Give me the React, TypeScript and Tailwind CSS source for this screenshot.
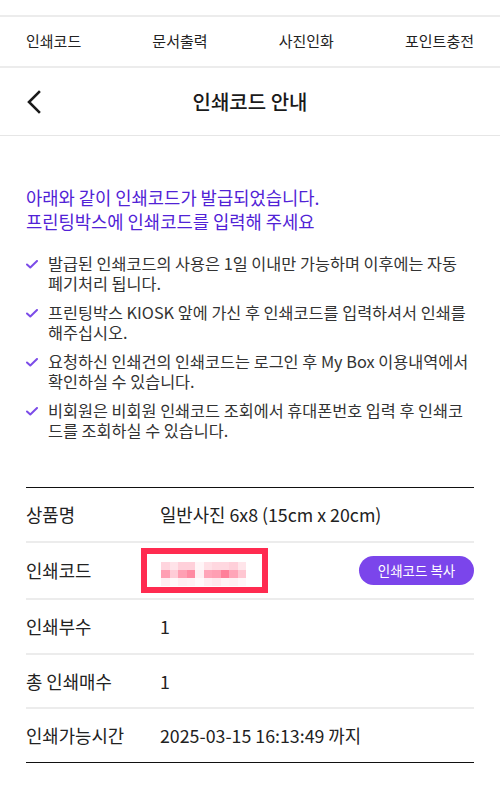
const navItems = ["인쇄코드", "문서출력", "사진인화", "포인트충전"];

const notices = [
  "발급된 인쇄코드의 사용은 1일 이내만 가능하며 이후에는 자동 폐기처리 됩니다.",
  "프린팅박스 KIOSK 앞에 가신 후 인쇄코드를 입력하셔서 인쇄를 해주십시오.",
  "요청하신 인쇄건의 인쇄코드는 로그인 후 My Box 이용내역에서 확인하실 수 있습니다.",
  "비회원은 비회원 인쇄코드 조회에서 휴대폰번호 입력 후 인쇄코드를 조회하실 수 있습니다.",
];

// pixelated blur over the code
const pixels = [
  "bg-[#ffd5de]", "bg-[#ffe3e9]", "bg-[#ffd0da]", "bg-[#ffd0da]", "bg-[#fff5f7]",
  "bg-[#ffe0e6]", "bg-[#ffd8e0]", "bg-[#ffd8e0]", "bg-[#ffd0da]", "bg-[#ffe5ea]",
  "bg-[#ff9fb3]", "bg-[#ffccd7]", "bg-[#ff9fb3]", "bg-[#ff8aa2]", "bg-[#fff0f3]",
  "bg-[#ffa5b8]", "bg-[#ff9fb3]", "bg-[#ff7f99]", "bg-[#ffa5b8]", "bg-[#ffc7d2]",
  "bg-[#ffeef2]", "bg-[#fff8f9]", "bg-[#ffeef2]", "bg-[#fff1f4]", "bg-[#fffafb]",
  "bg-[#ffeef2]", "bg-[#ffe8ed]", "bg-[#fff3f5]", "bg-[#fff0f3]", "bg-[#fff7f9]",
];

const CheckIcon = () => (
  <svg width="12" height="9" viewBox="0 0 12 9" fill="none" className="mt-[7px] shrink-0">
    <path d="M1 4.5 L4.3 7.5 L11 1" stroke="#7c4ce8" strokeWidth="2" strokeLinecap="round" strokeLinejoin="round" />
  </svg>
);

const Row = ({ label, children, height }: { label: string; children: React.ReactNode; height: string }) => (
  <div className={`flex items-center border-b-2 border-[#ececec] ${height}`}>
    <div className="w-[134px] shrink-0 text-[17.8px] text-[#222]">{label}</div>
    <div className="flex flex-1 items-center text-[17.8px] text-[#222]">{children}</div>
  </div>
);

const App = () => {
  return (
    <div className="min-h-[787px] bg-white font-['Noto_Sans_CJK_KR','Noto_Sans',sans-serif]">
      <div className="h-[17px] border-b-2 border-[#ececec]" />
      <nav className="flex h-[51px] items-center justify-between border-b-2 border-[#ececec] px-[26px] text-[15px] text-[#222]">
        {navItems.map((item) => (
          <span key={item}>{item}</span>
        ))}
      </nav>
      <header className="relative flex h-[68px] items-center justify-center border-b border-[#e6e6e6]">
        <button className="absolute left-[26px] top-[22px]">
          <svg width="16" height="24" viewBox="0 0 16 24" fill="none">
            <path d="M13 2 L3 12 L13 22" stroke="#1a1a1a" strokeWidth="2.6" strokeLinecap="square" />
          </svg>
        </button>
        <h1 className="text-[20px] font-medium text-[#1a1a1a]">인쇄코드 안내</h1>
      </header>

      <main className="px-[26px] pt-[49px]">
        <div className="text-[17.7px] text-[#5122d6]">
          <p className="leading-[24px]">아래와 같이 인쇄코드가 발급되었습니다.</p>
          <p className="leading-[24px]">프린팅박스에 인쇄코드를 입력해 주세요</p>
        </div>

        <ul className="mt-[20px] flex flex-col gap-[9px]">
          {notices.map((text) => (
            <li key={text} className="flex gap-[10px] text-[16.3px] leading-[20px] text-[#333]">
              <CheckIcon />
              <span>{text}</span>
            </li>
          ))}
        </ul>

        <section className="mt-[47px] border-t border-[#111]">
          <Row label="상품명" height="h-[55px]">일반사진 6x8 (15cm x 20cm)</Row>
          <Row label="인쇄코드" height="h-[57px]">
            <div className="-ml-[19px] flex h-[45px] w-[127px] items-center border-[6px] border-[#ff2b50] bg-white pl-[14px] pt-[7px]">
              <div className="grid h-[25px] w-[85px] grid-cols-10 grid-rows-3">
                {pixels.map((c, i) => (
                  <div key={i} className={c} />
                ))}
              </div>
            </div>
            <button className="ml-auto h-[29px] w-[115px] rounded-full bg-[#7b45eb] text-[13.5px] text-white">
              인쇄코드 복사
            </button>
          </Row>
          <Row label="인쇄부수" height="h-[55px]">1</Row>
          <Row label="총 인쇄매수" height="h-[54px]">1</Row>
          <div className="flex h-[54px] items-center border-b border-[#111]">
            <div className="w-[134px] shrink-0 text-[17.8px] text-[#222]">인쇄가능시간</div>
            <div className="text-[17.8px] text-[#222]">2025-03-15 16:13:49 까지</div>
          </div>
        </section>
      </main>
    </div>
  );
};

export default App;
